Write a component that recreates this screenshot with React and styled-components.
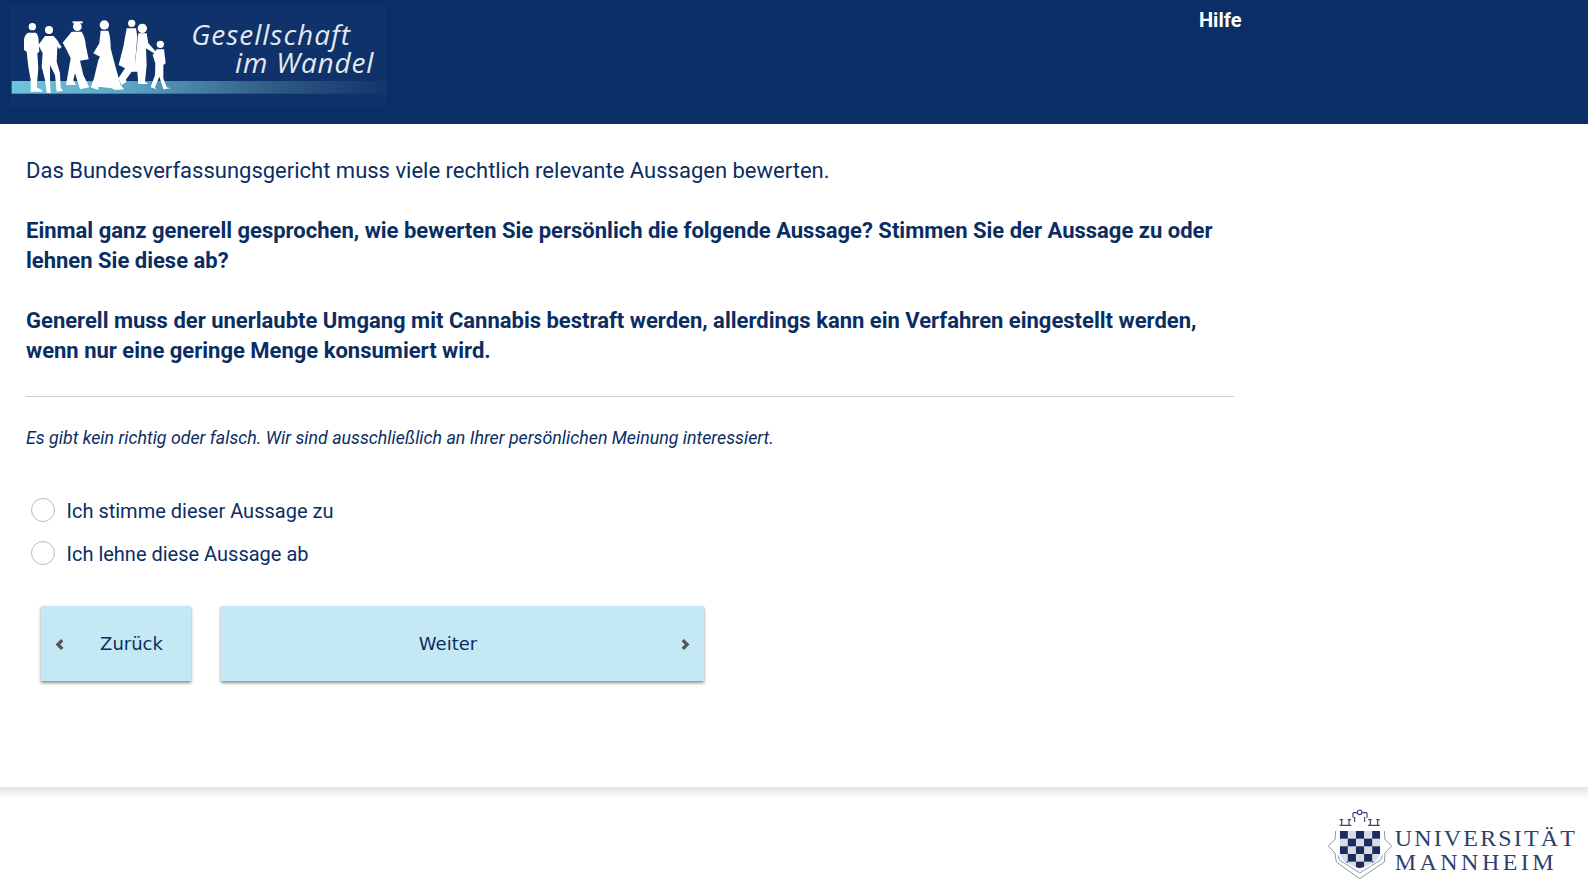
import React from 'react';
import styled, { createGlobalStyle } from 'styled-components';

const GlobalStyle = createGlobalStyle`
  html, body {
    margin: 0;
    padding: 0;
    background: #fff;
    font-family: Roboto, "Liberation Sans", sans-serif;
    color: #0a2e63;
  }
`;

const Page = styled.div`
  width: 1588px;
  height: 885px;
  overflow: hidden;
  display: flex;
  flex-direction: column;
`;

const Header = styled.header`
  height: 124px;
  background: #0a2f66;
  display: flex;
  align-items: flex-start;
  flex-shrink: 0;
`;

const LogoWrap = styled.div`
  width: 1199px;
  flex-shrink: 0;
`;

const HelpLink = styled.a`
  color: #fff;
  font-size: 20px;
  font-weight: 700;
  line-height: 22px;
  margin-top: 9px;
`;

const Main = styled.main`
  height: 663px;
  flex-shrink: 0;
  padding: 32px 0 0 26px;
  box-sizing: border-box;
`;

const Content = styled.div`
  width: 1208px;
`;

const Intro = styled.p`
  margin: 0 0 30px;
  font-size: 22px;
  line-height: 30px;
`;

const Question = styled.p`
  margin: 0 0 30px;
  font-size: 22px;
  line-height: 30px;
  font-weight: 700;
`;

const Divider = styled.hr`
  margin: 0;
  border: 0;
  border-top: 1px solid #ccc;
`;

const Hint = styled.p`
  margin: 29px 0 46px;
  font-size: 17.8px;
  line-height: 24px;
  font-style: italic;
`;

const Options = styled.div`
  display: flex;
  flex-direction: column;
  gap: 13px;
  padding-left: 4.5px;
`;

const Option = styled.label`
  display: flex;
  align-items: center;
  gap: 12px;
  height: 30px;
  font-size: 20px;
`;

const RadioDot = styled.span`
  width: 22px;
  height: 22px;
  margin-bottom: 3px;
  border: 1px solid #bbb;
  border-radius: 50%;
  background: #fff;
`;

const Nav = styled.div`
  display: flex;
  gap: 30px;
  margin: 37px 0 0 15px;
`;

const NavButton = styled.button`
  width: ${(p) => p.$width}px;
  height: 75px;
  border: 0;
  padding: 0 12px;
  background: #c5e8f5;
  color: #0a2e63;
  font-family: "DejaVu Sans", sans-serif;
  font-size: 18px;
  display: flex;
  align-items: center;
  justify-content: space-between;
  box-shadow: 0 2px 3px rgba(0, 0, 0, 0.45);
`;

const ButtonLabel = styled.span`
  flex: 1;
  text-align: center;
`;

const ChevronBox = styled.span`
  display: flex;
  margin: ${(p) => (p.$left ? '2px 18px 0 0' : '2px 0 0 16px')};
`;

const Footer = styled.footer`
  flex: 1;
  background: linear-gradient(#e3e3e3, #fff) 0 0 / 100% 12px no-repeat;
  display: flex;
  justify-content: flex-end;
  align-items: flex-start;
  padding: 20px 8px 0 0;
  box-sizing: border-box;
`;

const Chevron = ({ left }) => (
  <ChevronBox $left={left}>
    <svg width="13" height="13" viewBox="0 0 12 12" fill="none" stroke="#555" strokeWidth="3">
      <path d={left ? 'M8.5 2L4.5 6L8.5 10' : 'M3.5 2L7.5 6L3.5 10'} />
    </svg>
  </ChevronBox>
);

// the walking family, coordinates are 3x the on-screen pixels
const people = [
  'M85 98 L108 98 Q116 105 116 125 L118 155 L112 160 L115 205 L110 262 L125 270 L128 275 L92 275 L92 240 L85 200 L80 155 L72 150 L72 118 Q75 102 85 98 Z',
  'M135 108 L160 108 Q170 115 180 135 L185 140 L178 147 L172 140 L170 185 L180 220 L182 265 L190 272 L170 275 L165 225 L150 195 L150 240 L152 280 L140 278 L135 240 L125 200 L128 160 L115 135 Z',
  'M215 95 L245 95 Q255 110 258 140 L266 178 L240 182 L250 225 L268 262 L240 268 L225 220 L220 240 L228 255 L198 255 L205 215 L212 175 L200 150 L188 128 Z',
  'M302 92 L325 92 Q332 110 332 145 L345 195 L362 255 L372 268 L345 270 L335 265 L295 260 L295 270 L272 262 L282 235 L295 180 L300 170 L280 160 L298 130 Z',
  'M380 85 L408 85 L412 110 L405 190 L395 205 L372 225 L380 245 L365 255 L355 235 L375 205 L356 195 L370 140 Z',
  'M415 100 L440 100 L445 130 L468 155 L462 160 L438 145 L440 195 L435 245 L445 252 L415 252 L412 215 L395 215 L370 250 L360 240 L385 205 L405 190 Z',
  'M470 148 L492 148 L497 190 L490 195 L490 235 L500 262 L512 265 L490 268 L478 230 L465 262 L470 268 L452 262 L465 225 L466 190 L458 165 L462 160 Z',
];

const heads = [
  [97, 80, 11],
  [147, 90, 12],
  [232, 80, 13],
  [313, 75, 14],
  [395, 70, 11],
  [427, 85, 14],
  [481, 133, 11],
];

const Logo = () => (
  <svg width="400" height="124" viewBox="0 0 1200 372" style={{ display: 'block' }}>
    <defs>
      <linearGradient id="stripe" x1="0" x2="1" y1="0" y2="0">
        <stop offset="0" stopColor="#6dc4de" />
        <stop offset="0.3" stopColor="#5da6c4" />
        <stop offset="0.7" stopColor="#2f5a84" />
        <stop offset="1" stopColor="#12366b" />
      </linearGradient>
      <filter id="soft">
        <feGaussianBlur stdDeviation="1.2" />
      </filter>
    </defs>
    <rect x="30" y="18" width="1130" height="300" fill="#0e3269" />
    <rect x="35" y="243" width="1125" height="38" fill="url(#stripe)" />
    <g fill="#fff" filter="url(#soft)">
      {people.map((d) => (
        <path key={d} d={d} />
      ))}
      {heads.map(([cx, cy, r]) => (
        <circle key={cx} cx={cx} cy={cy} r={r} />
      ))}
      <rect x="218" y="64" width="30" height="6" />
    </g>
    <text x="574" y="135" fill="#e4e9f0" fontFamily="'Open Sans', sans-serif" fontStyle="italic" fontSize="84" textLength="476">Gesellschaft</text>
    <text x="705" y="218" fill="#e4e9f0" fontFamily="'Open Sans', sans-serif" fontStyle="italic" fontSize="84" textLength="415">im Wandel</text>
  </svg>
);

const checks = [];
for (let r = 0; r < 5; r++) {
  for (let c = 0; c < 5; c++) {
    if ((r + c) % 2 === 0) checks.push([c, r]);
  }
}

// coordinates are 3x the on-screen pixels as well
const UniLogo = () => (
  <svg width="257" height="73" viewBox="40 80 771 219" style={{ display: 'block' }}>
    <defs>
      <filter id="softer">
        <feGaussianBlur stdDeviation="1" />
      </filter>
      <clipPath id="shield">
        <path d="M90 152 H212 V215 Q212 245 150 264 Q90 245 90 215 Z" />
      </clipPath>
    </defs>
    <g filter="url(#softer)">
      <g fill="none" stroke="#8d97ad" strokeWidth="3">
        <path d="M78 152 L76 178 L56 197 L76 218 L80 245 L112 268 L150 295 L190 268 L224 245 L226 218 L246 197 L226 178 L224 152" />
        <path d="M85 225 L90 240 L120 258 L150 278 L182 258 L212 240 L218 225" />
      </g>
      <g fill="none" stroke="#35466f" strokeWidth="3.5">
        <path d="M90 135 H125 M96 118 V135 M118 118 V135 M90 118 H100 M114 118 H124" />
        <path d="M175 135 H210 M182 118 V135 M204 118 V135 M176 118 H186 M200 118 H210" />
        <path d="M130 97 H142 M158 97 H172 M130 97 V112 M172 97 V112 M135 125 L135 110 M165 125 L165 110" />
        <circle cx="150" cy="96" r="7" />
      </g>
      <g clipPath="url(#shield)">
        <rect x="88" y="150" width="126" height="116" fill="#d9dce6" />
        {checks.map(([c, r]) => (
          <rect key={`${c}-${r}`} x={90 + c * 24.4} y={152 + r * 23} width="24.4" height="23" fill="#1c2c5c" />
        ))}
      </g>
    </g>
    <text x="255" y="198" fill="#2f3f6c" fontFamily="'Liberation Serif', serif" fontSize="72" textLength="541">UNIVERSITÄT</text>
    <text x="255" y="268" fill="#2f3f6c" fontFamily="'Liberation Serif', serif" fontSize="72" textLength="477">MANNHEIM</text>
  </svg>
);

export default function App() {
  return (
    <Page>
      <GlobalStyle />
      <Header>
        <LogoWrap>
          <Logo />
        </LogoWrap>
        <HelpLink>Hilfe</HelpLink>
      </Header>
      <Main>
        <Content>
          <Intro>Das Bundesverfassungsgericht muss viele rechtlich relevante Aussagen bewerten.</Intro>
          <Question>Einmal ganz generell gesprochen, wie bewerten Sie persönlich die folgende Aussage? Stimmen Sie der Aussage zu oder lehnen Sie diese ab?</Question>
          <Question>Generell muss der unerlaubte Umgang mit Cannabis bestraft werden, allerdings kann ein Verfahren eingestellt werden, wenn nur eine geringe Menge konsumiert wird.</Question>
          <Divider />
          <Hint>Es gibt kein richtig oder falsch. Wir sind ausschließlich an Ihrer persönlichen Meinung interessiert.</Hint>
          <Options>
            <Option><RadioDot />Ich stimme dieser Aussage zu</Option>
            <Option><RadioDot />Ich lehne diese Aussage ab</Option>
          </Options>
          <Nav>
            <NavButton $width={150}>
              <Chevron left />
              <ButtonLabel>Zurück</ButtonLabel>
            </NavButton>
            <NavButton $width={483}>
              <ButtonLabel>Weiter</ButtonLabel>
              <Chevron />
            </NavButton>
          </Nav>
        </Content>
      </Main>
      <Footer>
        <UniLogo />
      </Footer>
    </Page>
  );
}
